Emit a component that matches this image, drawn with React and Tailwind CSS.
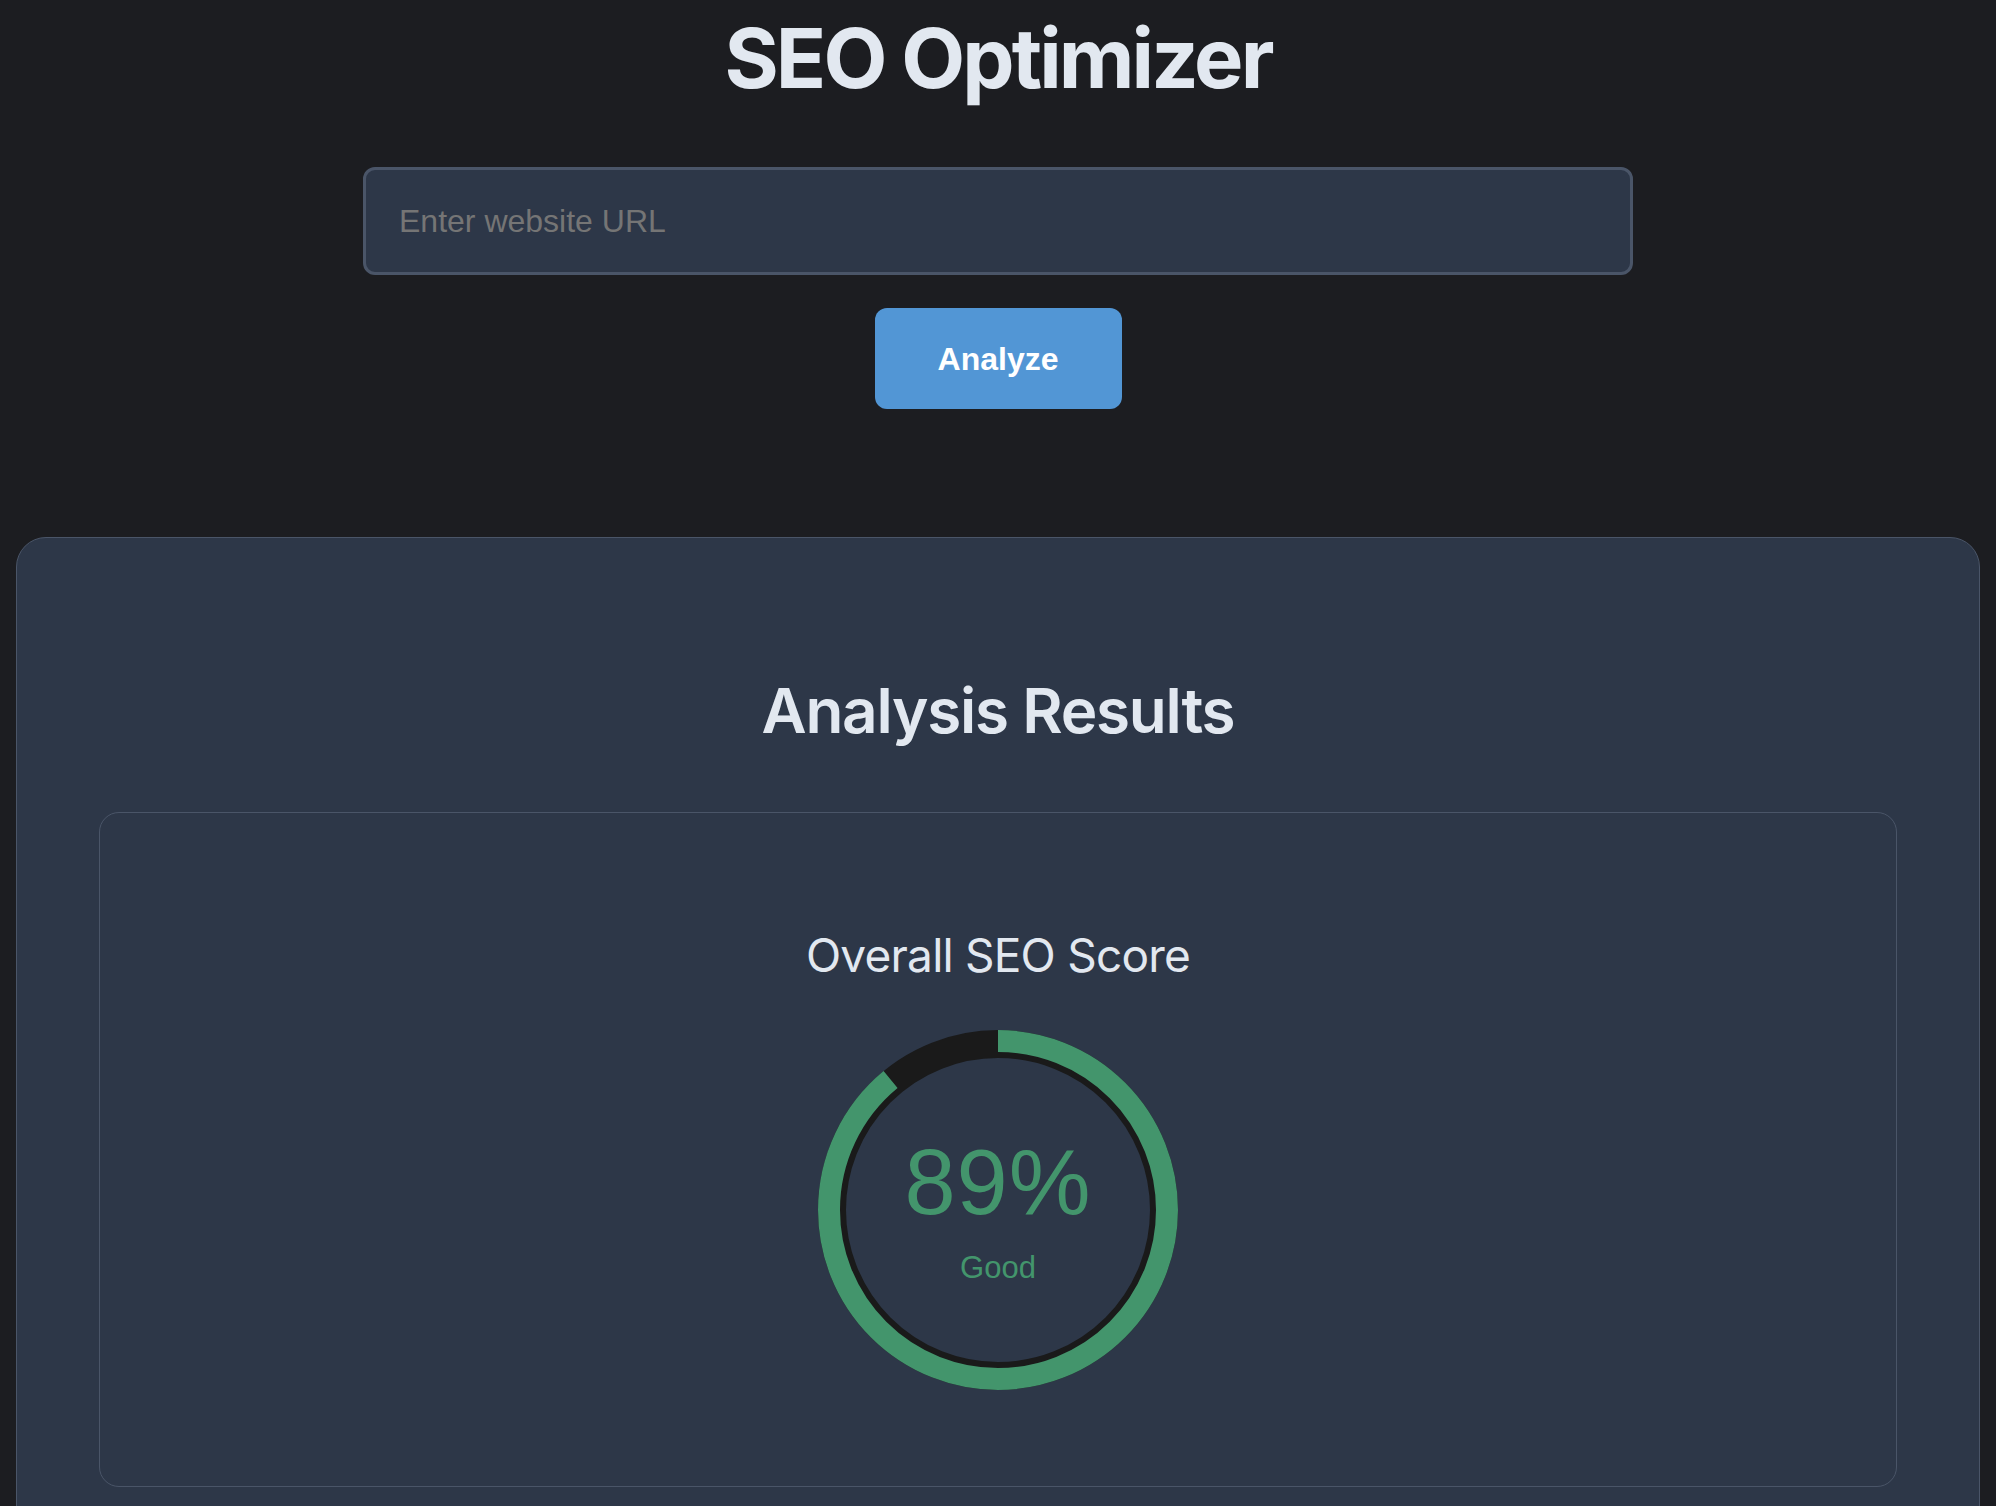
import { useState } from "react";

function ScoreRing({ score = 89, label = "Good" }) {
  const r = 169;
  const c = 2 * Math.PI * r;
  const offset = c * (1 - score / 100);

  return (
    <div className="relative h-[360px] w-[360px]">
      <svg viewBox="0 0 360 360" className="absolute inset-0 h-full w-full">
        <circle cx="180" cy="180" r="166" fill="none" stroke="#1a1a1a" strokeWidth="28" />
        <circle
          cx="180"
          cy="180"
          r={r}
          fill="none"
          stroke="#43956c"
          strokeWidth="22"
          strokeDasharray={c}
          strokeDashoffset={offset}
          transform="rotate(-90 180 180)"
        />
      </svg>
      <div className="absolute inset-0 flex flex-col items-center justify-center font-['Liberation_Sans',Arial,sans-serif] text-[#43956c]">
        <span className="text-[92px] leading-[90px] tracking-[1px]">{score}%</span>
        <span className="mt-[25px] text-[31px] leading-none">{label}</span>
      </div>
    </div>
  );
}

export default function App() {
  const [url, setUrl] = useState("");

  return (
    <div className="min-h-screen bg-[#1c1d21] pt-[16px] font-['Inter',sans-serif] text-[#e2e8f0]">
      {/* HEADER */}
      <div className="flex flex-col items-center">
        <h1 className="text-[83px] font-bold leading-[84px] tracking-[-0.035em]">SEO Optimizer</h1>

        <input
          value={url}
          onChange={(e) => setUrl(e.target.value)}
          placeholder="Enter website URL"
          className="mt-[67px] h-[108px] w-[1270px] rounded-[12px] border-[3px] border-[#4a5568] bg-[#2d3748] px-[33px] font-['Liberation_Sans',Arial,sans-serif] text-[32px] text-[#e2e8f0] outline-none placeholder:text-[#757575]"
        />

        <button className="mt-[33px] h-[101px] w-[247px] rounded-[12px] bg-[#5296d5] font-['Liberation_Sans',Arial,sans-serif] text-[32px] font-bold text-white">
          Analyze
        </button>
      </div>

      {/* RESULTS */}
      <section className="mx-[16px] mt-[128px] rounded-[30px] border border-[#4a5568] bg-[#2d3748] px-[82px] pb-[60px] pt-[142px]">
        <h2 className="text-center text-[62px] font-semibold leading-[62px] tracking-[-0.02em]">Analysis Results</h2>

        <div className="mt-[70px] flex flex-col items-center rounded-[20px] border border-[#4a5568] pb-[96px] pt-[119px]">
          <h3 className="text-[46px] leading-[46px] tracking-[-0.017em]">Overall SEO Score</h3>
          <div className="mt-[52px]">
            <ScoreRing score={89} label="Good" />
          </div>
        </div>
      </section>
    </div>
  );
}
